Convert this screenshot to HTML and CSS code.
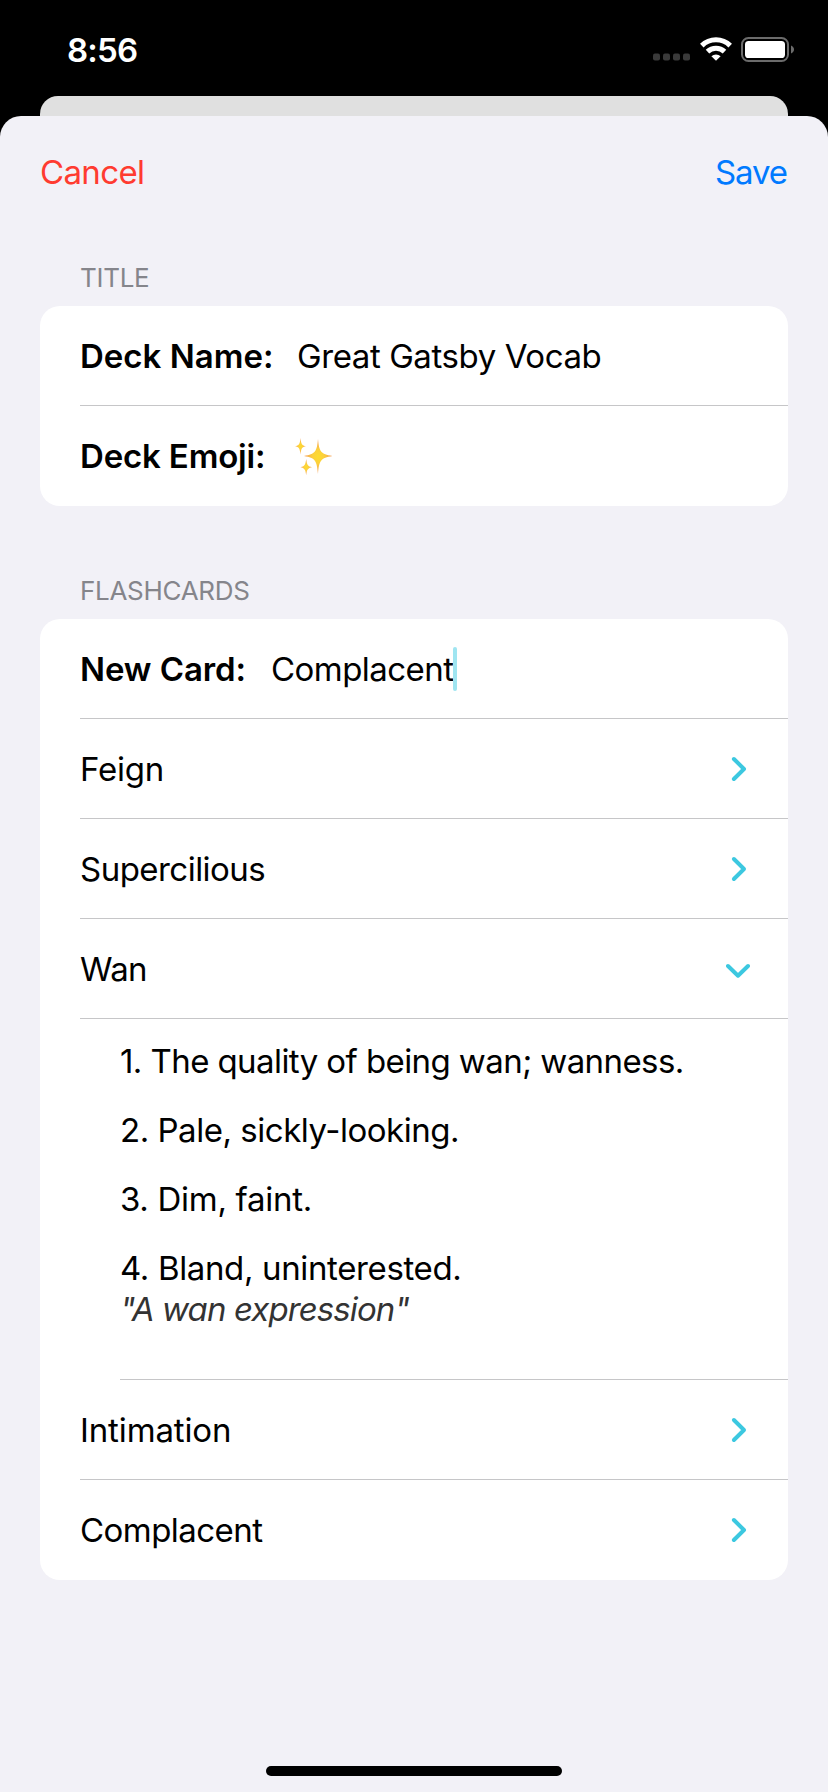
FILE: index.html
```html
<!DOCTYPE html>
<html lang="en">
<head>
<meta charset="utf-8">
<title>Edit Deck</title>
<link rel="stylesheet" href="styles.css">
</head>
<body>
<div class="screen">
  <header class="status">
    <span class="time">8:56</span>
    <div class="indicators">
      <svg class="cell" width="38" height="8" viewBox="0 0 38 8"><g fill="#3a3a3a"><rect x="0" y="0.5" width="7" height="7" rx="2"/><rect x="10" y="0.5" width="7" height="7" rx="2"/><rect x="20" y="0.5" width="7" height="7" rx="2"/><rect x="30" y="0.5" width="7" height="7" rx="2"/></g></svg>
      <svg class="wifi" width="32" height="24" viewBox="0 0 32 24"><g fill="none" stroke="#fff" stroke-width="5"><path d="M1.800 8.600A20.200 20.200 0 0 1 30.200 8.600"/><path d="M7.500 14.600A12.200 12.200 0 0 1 24.500 14.600"/></g><path fill="#fff" d="M16 23.800l-4.600-4.500a6.600 6.600 0 0 1 9.200 0z"/></svg>
      <svg class="battery" width="54" height="26" viewBox="0 0 54 26"><rect x="1" y="1" width="46" height="23" rx="6.5" fill="none" stroke="#6b6b6b" stroke-width="2"/><rect x="4" y="4" width="40" height="17" rx="3.6" fill="#fff"/><path d="M50 8.500c4 1.500 4 6.500 0 8z" fill="#6b6b6b"/></svg>
    </div>
  </header>
  <div class="backcard"></div>
  <main class="sheet">
    <nav class="nav"><a class="cancel">Cancel</a><a class="save">Save</a></nav>
    <h2 class="heading title-head">TITLE</h2>
    <section class="card">
      <div class="row"><b class="deck-name">Deck Name:</b><span class="gatsby">Great Gatsby Vocab</span></div>
      <div class="row"><b class="deck-emoji">Deck Emoji:</b>
        <svg class="sparkles" width="38" height="38" viewBox="0 0 38 38"><defs><radialGradient id="gold"><stop offset="0" stop-color="#fddc2e"/><stop offset=".4" stop-color="#fcd03c"/><stop offset="1" stop-color="#f39a5a"/></radialGradient></defs><g fill="url(#gold)"><path d="M23 1C24.200 13.500 25.500 16 37.500 18C25.500 20 24.200 22.500 23 36C21.800 22.500 20.500 20 9 18C20.500 16 21.800 13.500 23 1Z"/><path d="M5.500 0C6.200 6.400 7 7.500 11 8.300C7 9.100 6.200 10.200 5.500 16.500C4.800 10.200 4 9.100 0 8.300C4 7.500 4.800 6.400 5.500 0Z"/><path d="M11.200 21C12 27 12.800 28.300 17 29.200C12.800 30.100 12 31.400 11.200 37C10.400 31.400 9.600 30.100 5.500 29.200C9.600 28.300 10.400 27 11.200 21Z"/></g></svg>
      </div>
    </section>
    <h2 class="heading cards-head">FLASHCARDS</h2>
    <section class="card">
      <div class="row"><b class="new-card">New Card:</b><span class="complacent">Complacent</span><i class="caret"></i></div>
      <div class="row"><span class="feign">Feign</span><svg class="chev" width="24" height="28" viewBox="0 0 24 28"><path d="M7.900 4L18 14L7.900 24"/></svg></div>
      <div class="row"><span class="supercilious">Supercilious</span><svg class="chev" width="24" height="28" viewBox="0 0 24 28"><path d="M7.900 4L18 14L7.900 24"/></svg></div>
      <div class="row"><span class="wan">Wan</span><svg class="chev" width="24" height="28" viewBox="0 0 24 28"><path d="M2 11L12 20.700L22 11"/></svg></div>
      <div class="definitions">
        <p class="d1">1. The quality of being wan; wanness.</p>
        <p class="d2">2. Pale, sickly-looking.</p>
        <p class="d3">3. Dim, faint.</p>
        <p class="d4">4. Bland, uninterested.</p>
        <p class="example">"A wan expression"</p>
      </div>
      <div class="row"><span class="intimation">Intimation</span><svg class="chev" width="24" height="28" viewBox="0 0 24 28"><path d="M7.900 4L18 14L7.900 24"/></svg></div>
      <div class="row"><span class="complacent">Complacent</span><svg class="chev" width="24" height="28" viewBox="0 0 24 28"><path d="M7.900 4L18 14L7.900 24"/></svg></div>
    </section>
    <div class="home"></div>
  </main>
</div>
</body>
</html>
```
FILE: styles.css
```css
* { box-sizing: border-box; }
body, h2, p { margin: 0; }
body { background: #000; font-family: Inter, "Liberation Sans", sans-serif; font-size: 33px; line-height: 41px; color: #000; }
.screen { width: 828px; height: 1792px; display: flex; flex-direction: column; background: #000; overflow: hidden; white-space: nowrap; }
.status { height: 96px; flex: none; display: flex; justify-content: space-between; align-items: flex-start; padding: 30px 33px 0 67px; color: #fff; }
.time { font-weight: 600; letter-spacing: -0.8px; }
.indicators { display: flex; align-items: flex-start; padding-top: 7px; }
.cell { margin: 16px 9px 0 0; }
.wifi { margin-right: 9px; }
.backcard { height: 20px; flex: none; margin: 0 40px; background: #e0e0e0; border-radius: 18px 18px 0 0; }
.sheet { flex: 1; background: #f2f1f7; border-radius: 21px 21px 0 0; display: flex; flex-direction: column; }
.nav { height: 114px; flex: none; display: flex; justify-content: space-between; padding: 36px 41px 0 40px; }
.cancel { color: #ff3b30; letter-spacing: -0.65px; }
.save { color: #007aff; letter-spacing: -1.1px; }
.heading { font-size: 26px; font-weight: 400; line-height: 32px; color: #85858b; padding-left: 80px; flex: none; letter-spacing: -0.3px; }
.title-head { height: 76px; padding-top: 32px; }
.cards-head { height: 113px; padding-top: 69px; }
.card { margin: 0 40px; background: #fff; border-radius: 20px; flex: none; padding-left: 40px; }
.row { height: 100px; display: flex; align-items: center; border-bottom: 1px solid #c6c6c8; }
.row:last-child { border-bottom-color: transparent; }
.row b, .row span { padding-top: 2px; }
.row b { font-weight: 600; }
.deck-name { width: 217px; }
.deck-emoji { width: 215px; letter-spacing: -0.17px; }
.new-card { width: 191px; letter-spacing: -0.1px; }
.sparkles { margin-top: 2px; }
.gatsby { letter-spacing: -0.42px; }
.complacent { letter-spacing: -0.55px; }
.feign { letter-spacing: -0.24px; }
.supercilious { letter-spacing: -0.53px; }
.wan { letter-spacing: -0.7px; }
.intimation { letter-spacing: -0.13px; }
.chev { margin-left: auto; margin-right: 38px; fill: none; stroke: #3cc8e0; stroke-width: 4; stroke-linecap: round; stroke-linejoin: round; }
.caret { width: 4px; height: 44px; border-radius: 2px; background: #9fe5f1; }
.definitions { height: 361px; margin-left: 40px; padding-top: 22px; border-bottom: 1px solid #c6c6c8; }
.definitions p { margin-bottom: 28px; }
.d1 { letter-spacing: -0.58px; }
.d2 { letter-spacing: -0.47px; }
.d3 { letter-spacing: -0.29px; }
.d4 { letter-spacing: -0.36px; }
.definitions .d4 { margin-bottom: 0; }
.definitions .example { font-style: italic; color: #333; letter-spacing: -0.9px; }
.home { width: 296px; height: 10px; border-radius: 5px; background: #000; margin: auto auto 16px; }
```
